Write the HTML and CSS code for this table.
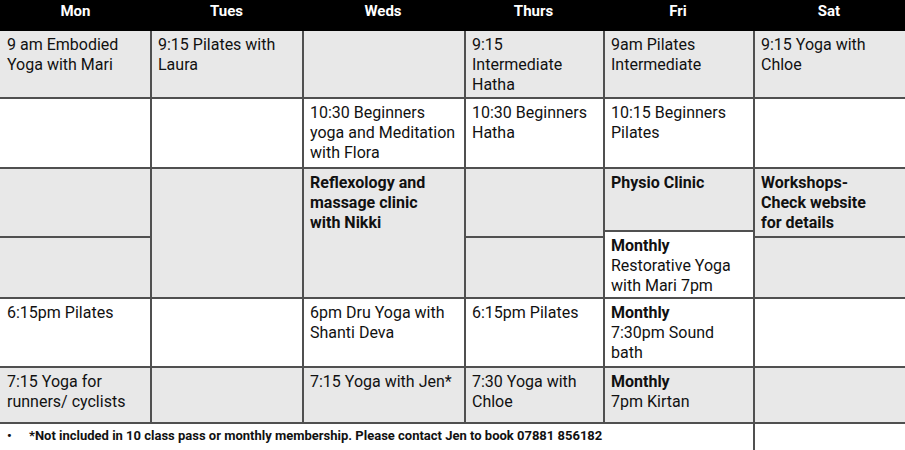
FILE: index.html
```html
<!DOCTYPE html>
<html lang="en">
<head>
<meta charset="utf-8">
<title>Timetable</title>
<link rel="stylesheet" href="styles.css">
</head>
<body>
<div class="page">
  <div class="head">
    <div class="hcell">Mon</div>
    <div class="hcell">Tues</div>
    <div class="hcell">Weds</div>
    <div class="hcell">Thurs</div>
    <div class="hcell">Fri</div>
    <div class="hcell">Sat</div>
  </div>
  <div class="grid">
    <!-- row 1 -->
    <div class="cell gray c1 r1">9 am Embodied Yoga with Mari</div>
    <div class="cell gray c2 r1">9:15 Pilates with Laura</div>
    <div class="cell gray c3 r1"></div>
    <div class="cell gray c4 r1 tight">9:15 Intermediate Hatha</div>
    <div class="cell gray c5 r1">9am Pilates Intermediate</div>
    <div class="cell gray c6 r1">9:15 Yoga with Chloe</div>
    <!-- row 2 -->
    <div class="cell c1 r2"></div>
    <div class="cell c2 r2"></div>
    <div class="cell c3 r2">10:30 Beginners yoga and Meditation with Flora</div>
    <div class="cell c4 r2">10:30 Beginners Hatha</div>
    <div class="cell c5 r2">10:15 Beginners Pilates</div>
    <div class="cell c6 r2"></div>
    <!-- rows 3-4 -->
    <div class="cell gray c1 r3"></div>
    <div class="cell gray c1 r4"></div>
    <div class="cell gray c2 r34"></div>
    <div class="cell gray c3 r34 bold tight">Reflexology and massage clinic with Nikki</div>
    <div class="cell gray c4 r3"></div>
    <div class="cell gray c4 r4"></div>
    <div class="cell gray c5 r3a bold">Physio Clinic</div>
    <div class="cell c5 r3b4"><b>Monthly</b><br>Restorative Yoga with Mari 7pm</div>
    <div class="cell gray c6 r3 bold tight">Workshops-Check website for details</div>
    <div class="cell gray c6 r4"></div>
    <!-- row 5 -->
    <div class="cell c1 r5">6:15pm Pilates</div>
    <div class="cell c2 r5"></div>
    <div class="cell c3 r5">6pm Dru Yoga with Shanti Deva</div>
    <div class="cell c4 r5">6:15pm Pilates</div>
    <div class="cell c5 r5"><b>Monthly</b><br>7:30pm Sound bath</div>
    <div class="cell c6 r5"></div>
    <!-- row 6 -->
    <div class="cell gray c1 r6">7:15 Yoga for runners/ cyclists</div>
    <div class="cell gray c2 r6"></div>
    <div class="cell gray c3 r6">7:15 Yoga with Jen*</div>
    <div class="cell gray c4 r6">7:30 Yoga with Chloe</div>
    <div class="cell gray c5 r6"><b>Monthly</b><br>7pm Kirtan</div>
    <div class="cell gray c6 r6"></div>
    <!-- footer -->
    <div class="note">
      <span class="bullet">•</span>
      <span>*Not included in 10 class pass or monthly membership. Please contact Jen to book 07881 856182</span>
    </div>
    <div class="cell c6 rf"></div>
  </div>
</div>
</body>
</html>
```

FILE: styles.css
```css
html, body {
  margin: 0;
  padding: 0;
  background: #ffffff;
  overflow: hidden;
}

.page {
  width: 905px;
  height: 450px;
  overflow: hidden;
  font-family: Roboto, "Liberation Sans", sans-serif;
  color: #111;
}

.head {
  display: grid;
  grid-template-columns: 151px 151px 162px 139px 150px 152px;
  height: 31px;
  background: #000;
}

.hcell {
  color: #fff;
  font-weight: 700;
  font-size: 15px;
  line-height: 18px;
  padding-top: 2px;
  text-align: center;
}

.grid {
  display: grid;
  grid-template-columns: 150px 150px 160px 137px 148px 150px;
  grid-template-rows: 66px 68px 61px 4px 59px 67px 54px 40px;
  column-gap: 2px;
  row-gap: 2px;
  background: #505050;
}

.cell {
  background: #ffffff;
  font-size: 16px;
  line-height: 20px;
  padding: 4px 4px 0 7px;
}

.c2, .c3, .c4, .c5, .c6 { padding-left: 6px; }

.tight { padding-right: 22px; }

.gray { background: #e8e8e8; }
.bold { font-weight: 700; }

.c1 { grid-column: 1; }
.c2 { grid-column: 2; }
.c3 { grid-column: 3; }
.c4 { grid-column: 4; }
.c5 { grid-column: 5; }
.c6 { grid-column: 6; }

.r1 { grid-row: 1; }
.r2 { grid-row: 2; }
.r3 { grid-row: 3 / 5; }
.r3a { grid-row: 3; }
.r3b4 { grid-row: 4 / 6; }
.r4 { grid-row: 5; }
.r34 { grid-row: 3 / 6; }
.r5 { grid-row: 6; }
.r6 { grid-row: 7; }
.rf { grid-row: 8; }

.note {
  grid-column: 1 / 6;
  grid-row: 8;
  background: #ffffff;
  display: flex;
  font-weight: 700;
  font-size: 13px;
  line-height: 16px;
  padding: 4px 0 0 7px;
}

.bullet {
  width: 22px;
  flex: none;
}
```
